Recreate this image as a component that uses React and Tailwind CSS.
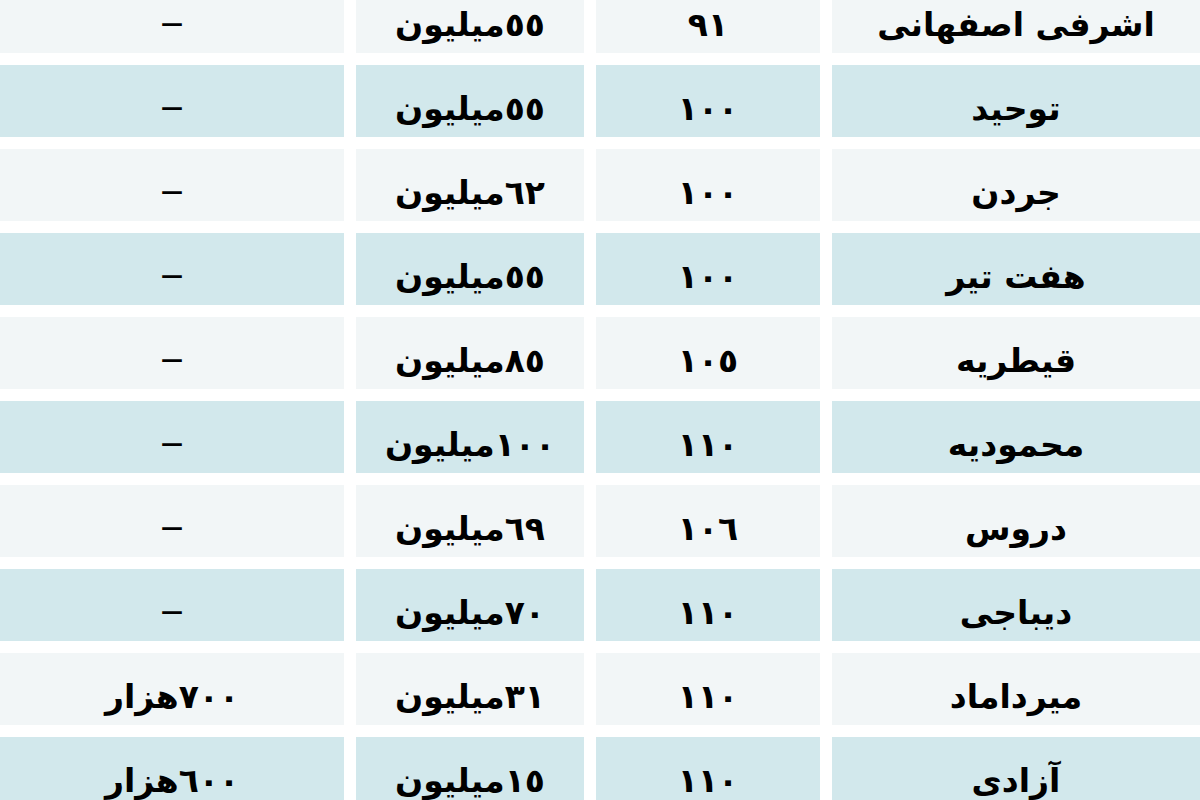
const rows = [
  { name: "اشرفی اصفهانی", size: "٩١", price: "٥٥میلیون", extra: null },
  { name: "توحید", size: "١٠٠", price: "٥٥میلیون", extra: null },
  { name: "جردن", size: "١٠٠", price: "٦٢میلیون", extra: null },
  { name: "هفت تیر", size: "١٠٠", price: "٥٥میلیون", extra: null },
  { name: "قیطریه", size: "١٠٥", price: "٨٥میلیون", extra: null },
  { name: "محمودیه", size: "١١٠", price: "١٠٠میلیون", extra: null },
  { name: "دروس", size: "١٠٦", price: "٦٩میلیون", extra: null },
  { name: "دیباجی", size: "١١٠", price: "٧٠میلیون", extra: null },
  { name: "میرداماد", size: "١١٠", price: "٣١میلیون", extra: "٧٠٠هزار" },
  { name: "آزادی", size: "١١٠", price: "١٥میلیون", extra: "٦٠٠هزار" },
];

function Cell({ children, shaded }) {
  return (
    <div
      className={`flex h-[72px] items-center justify-center pt-4 ${
        shaded ? "bg-[#d2e8ec]" : "bg-[#f2f6f7]"
      }`}
    >
      {children}
    </div>
  );
}

export default function App() {
  return (
    <div className="h-[800px] w-[1200px] overflow-hidden bg-white">
      <div
        dir="rtl"
        className="-mt-[19px] flex flex-col gap-3 font-['DejaVu_Sans',sans-serif] text-[33px] font-bold text-black"
      >
        {rows.map((row, i) => {
          const shaded = i % 2 === 1;
          return (
            <div
              key={row.name}
              className="grid grid-cols-[368px_224px_228px_344px] gap-x-3"
            >
              <Cell shaded={shaded}>{row.name}</Cell>
              <Cell shaded={shaded}>{row.size}</Cell>
              <Cell shaded={shaded}>{row.price}</Cell>
              <Cell shaded={shaded}>
                {row.extra ?? <span className="-mt-1 text-[22px]">—</span>}
              </Cell>
            </div>
          );
        })}
      </div>
    </div>
  );
}
